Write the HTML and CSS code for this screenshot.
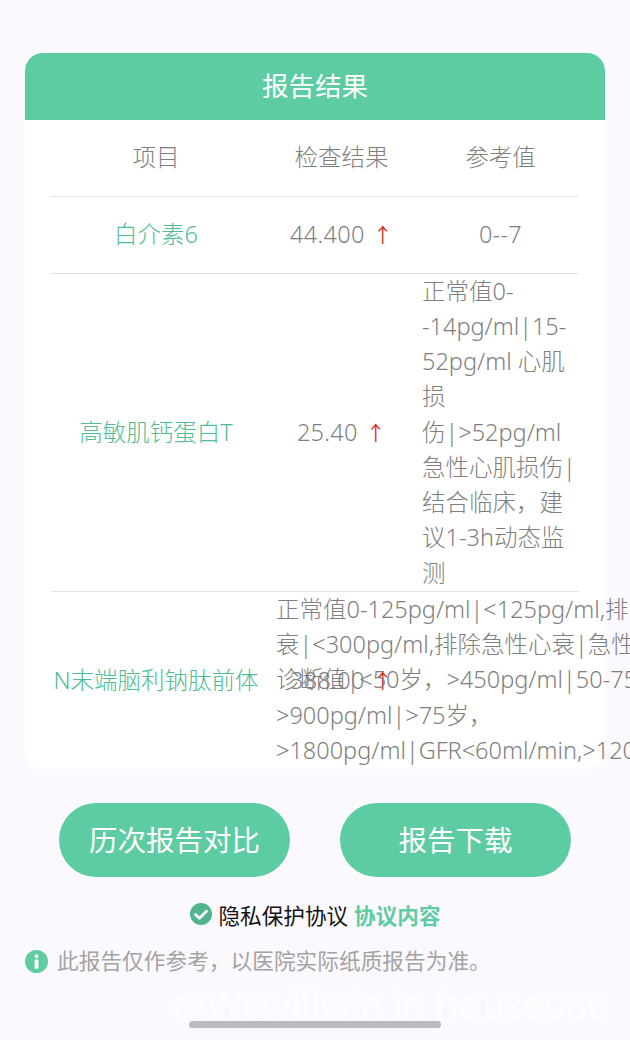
FILE: index.html
```html
<!DOCTYPE html>
<html lang="zh">
<head>
    <meta charset="UTF-8">
    <meta name="viewport" content="width=device-width, initial-scale=1.0">
    <title>报告结果</title>
    <link rel="stylesheet" href="styles.css">
</head>
<body>
    <div class="page">
        <div class="card">
            <div class="card-title">报告结果</div>
            <div class="table">
                <div class="row head-row">
                    <div class="cell">项目</div>
                    <div class="cell">检查结果</div>
                    <div class="cell">参考值</div>
                </div>
                <div class="row">
                    <div class="cell name">白介素6</div>
                    <div class="cell value">44.400<span class="up">↑</span></div>
                    <div class="cell value">0--7</div>
                </div>
                <div class="row">
                    <div class="cell name">高敏肌钙蛋白T</div>
                    <div class="cell value">25.40<span class="up">↑</span></div>
                    <div class="cell ref">正常值0-<br>-14pg/ml|15-<br>52pg/ml 心肌<br>损<br>伤|&gt;52pg/ml<br>急性心肌损伤|<br>结合临床，建<br>议1-3h动态监<br>测</div>
                </div>
                <div class="row last-row">
                    <div class="cell name">N末端脑利钠肽前体</div>
                    <div class="cell value result-under">388.00<span class="up">↑</span></div>
                    <div class="cell ref-wide">正常值0-125pg/ml|&lt;125pg/ml,排除慢性心<br>衰|&lt;300pg/ml,排除急性心衰|急性心衰<br>诊断值|&lt;50岁，&gt;450pg/ml|50-75岁，<br>&gt;900pg/ml|&gt;75岁，<br>&gt;1800pg/ml|GFR&lt;60ml/min,&gt;1200pg/ml</div>
                </div>
            </div>
        </div>

        <div class="actions">
            <button class="action-btn">历次报告对比</button>
            <button class="action-btn">报告下载</button>
        </div>

        <div class="agree">
            <svg class="agree-icon" viewBox="0 0 24 24"><circle cx="12" cy="12" r="12" fill="#4fb58f"/><path d="M6 12.5l4.2 4.2L18 9" fill="none" stroke="#fff" stroke-width="3" stroke-linecap="round" stroke-linejoin="round"/></svg>
            <span>隐私保护协议</span>
            <span class="agree-link">协议内容</span>
        </div>

        <div class="notice">
            <svg class="notice-icon" viewBox="0 0 24 24"><circle cx="12" cy="12" r="12" fill="#5fcca2"/><circle cx="12" cy="6.5" r="2" fill="#fff"/><rect x="10" y="10" width="4" height="9.5" rx="1" fill="#fff"/></svg>
            <span>此报告仅作参考，以医院实际纸质报告为准。</span>
        </div>

        <div class="watermark">@Wewillwin in house086</div>
        <div class="home-bar"></div>
    </div>
</body>
</html>
```
FILE: styles.css
```css
* {
    box-sizing: border-box;
    margin: 0;
    padding: 0;
}

html, body {
    height: 100%;
    overflow: hidden;
}

body {
    font-family: "Noto Sans", "Noto Sans CJK SC", sans-serif;
    color: #7f7f7f;
    background-color: #fbf9fe;
}

.page {
    position: relative;
    height: 1040px;
    padding: 53px 25px 0;
}

.card {
    height: 716px;
    background: #fff;
    border-radius: 18px;
    display: flex;
    flex-direction: column;
}

.card-title {
    height: 67px;
    flex: none;
    background-color: #5ecca2;
    border-radius: 18px 18px 0 0;
    color: #fff;
    font-size: 26.5px;
    line-height: 67px;
    text-align: center;
}

.table {
    flex: 1;
    min-height: 0;
    padding: 0 26px;
    overflow-x: visible;
    overflow-y: clip;
    font-weight: 300;
}

.row {
    display: grid;
    grid-template-columns: 210px 161px 157px;
    align-items: center;
    text-align: center;
    font-size: 23.5px;
    line-height: 35.25px;
    border-bottom: 1px solid #e2e2e2;
    min-height: 77px;
}

.head-row {
    min-height: 76.5px;
}

.cell {
    min-width: 0;
}

.name {
    color: #4fbd93;
}

.value {
    letter-spacing: 0.3px;
}

.up {
    font-family: "Noto Sans CJK SC", sans-serif;
    font-size: 20px;
    font-weight: 400;
    color: #d9301f;
    margin-left: 8px;
}

.ref {
    text-align: left;
    white-space: nowrap;
}

.last-row {
    height: 177px;
    border-bottom: none;
}

.result-under {
    grid-row: 1;
    grid-column: 2;
}

.ref-wide {
    grid-row: 1;
    grid-column: 2 / 4;
    align-self: start;
    margin-left: 15px;
    text-align: left;
    white-space: nowrap;
}

.actions {
    display: flex;
    justify-content: space-between;
    padding: 34px 34px 0;
}

.action-btn {
    width: 231px;
    height: 74px;
    padding-bottom: 3px;
    border: none;
    border-radius: 37px;
    background-color: #5ecca2;
    color: #fff;
    font-family: inherit;
    font-size: 28.5px;
}

.agree {
    display: flex;
    align-items: center;
    justify-content: center;
    gap: 6px;
    margin-top: 24px;
    font-size: 21.6px;
    line-height: 30px;
    color: #111;
}

.agree-icon {
    width: 22px;
    height: 22px;
    margin: -4px 1px 0 0;
}

.agree-link {
    color: #5ecca2;
    font-weight: 700;
}

.notice {
    display: flex;
    align-items: center;
    gap: 9px;
    margin-top: 15px;
    font-size: 21.7px;
    line-height: 30px;
    color: #a3a3a3;
}

.notice-icon {
    width: 23px;
    height: 23px;
}

.watermark {
    position: absolute;
    left: 173px;
    top: 981px;
    font-size: 37.7px;
    line-height: 48px;
    color: rgba(255, 255, 255, 0.5);
    white-space: nowrap;
}

.home-bar {
    position: absolute;
    left: 189px;
    top: 1021px;
    width: 252px;
    height: 7px;
    border-radius: 4px;
    background-color: #bcbabf;
}
```
